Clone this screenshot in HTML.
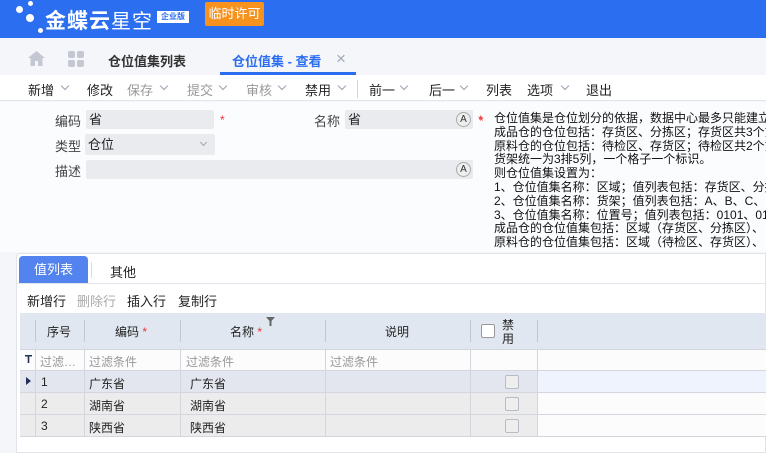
<!DOCTYPE html>
<html><head><meta charset="utf-8"><style>
*{margin:0;padding:0;box-sizing:border-box}
body{width:766px;height:453px;overflow:hidden;background:#f5f6f9;font-family:"Liberation Sans","Noto Sans CJK SC",sans-serif;font-size:12px;color:#222;position:relative}
.a{position:absolute;white-space:nowrap}
.chev{position:absolute;width:6px;height:6px;border-right:1px solid #9aa3b5;border-bottom:1px solid #9aa3b5;transform:rotate(45deg)}
.inp{position:absolute;background:#e9ebef;border-radius:2px;height:19px;padding-left:3px;line-height:19px;font-size:13px}
.ab{position:absolute;width:15px;height:15px;border-radius:50%;border:1px solid #aaa;background:#eee;font-size:10px;line-height:13px;text-align:center;color:#333}
.red{color:#e33}
.desc{position:absolute;left:494px;top:112px;font-size:12px;line-height:13.8px;white-space:nowrap;color:#111}
.vl{position:absolute;width:1px;background:#d3d6dd}
.hl{position:absolute;height:1px;background:#d3d6dd;left:20px;right:0}
.cb{position:absolute;width:14px;height:14px;border:1px solid #b8bcc4;border-radius:2px;background:#eee}
</style></head><body>
<div class="a" style="left:0;top:0;width:766px;height:38px;background:#2b6ff0"></div>
<div class="a" style="left:28px;top:1px;width:5px;height:5px;border-radius:50%;background:#fff"></div>
<div class="a" style="left:16px;top:6px;width:7px;height:7px;border-radius:50%;background:#fff"></div>
<div class="a" style="left:26px;top:14px;width:8px;height:8px;border-radius:50%;background:#fff"></div>
<div class="a" style="left:38px;top:28px;width:5px;height:5px;border-radius:50%;background:#fff"></div>
<div class="a" style="left:45px;top:5px;color:#fff;font-size:21px;font-weight:bold;letter-spacing:1px">金蝶云<span style="font-weight:normal;font-size:20px">星空</span></div>
<div class="a" style="left:157px;top:11px;width:32px;height:12px;background:#fff;color:#2b6ff0;font-size:8px;line-height:12px;text-align:center;font-weight:bold">企业版</div>
<div class="a" style="left:205px;top:2px;width:59px;height:24px;background:#f7921e;border-radius:2px;color:#fff;font-size:13px;line-height:24px;text-align:center">临时许可</div>
<div class="a" style="left:0;top:38px;width:766px;height:37px;background:#f4f6fa"></div>
<svg class="a" style="left:28px;top:51px" width="17" height="15" viewBox="0 0 17 15"><path d="M8.5 0L0 7h2.5v8h4.5v-5h3v5h4.5V7H17z" fill="#c4c8d2"/></svg>
<svg class="a" style="left:68px;top:51px" width="16" height="16"><rect x="0" y="0" width="7" height="7" rx="2" fill="#c4c8d2"/><rect x="9" y="0" width="7" height="7" rx="2" fill="#c4c8d2"/><rect x="0" y="9" width="7" height="7" rx="2" fill="#c4c8d2"/><rect x="9" y="9" width="7" height="7" rx="2" fill="#c4c8d2"/></svg>
<div class="a" style="left:108px;top:51px;font-size:13px;font-weight:bold;color:#333">仓位值集列表</div>
<div class="a" style="left:232px;top:51px;font-size:13px;font-weight:bold;color:#2b6ff0">仓位值集 - 查看</div>
<div class="a" style="left:336px;top:50px;font-size:17px;line-height:18px;color:#a0a8b8">×</div>
<div class="a" style="left:220px;top:72px;width:136px;height:3px;background:#2b6ff0"></div>
<div class="a" style="left:0;top:75px;width:766px;height:26px;background:#fff;border-bottom:1px solid #e3e6ec"></div>
<div class="a" style="left:28px;top:80px;font-size:13px">新增</div><div class="chev" style="left:62px;top:83px"></div>
<div class="a" style="left:87px;top:80px;font-size:13px">修改</div>
<div class="a" style="left:127px;top:80px;font-size:13px;color:#999">保存</div><div class="chev" style="left:161px;top:83px"></div>
<div class="a" style="left:187px;top:80px;font-size:13px;color:#999">提交</div><div class="chev" style="left:220px;top:83px"></div>
<div class="a" style="left:246px;top:80px;font-size:13px;color:#999">审核</div><div class="chev" style="left:279px;top:83px"></div>
<div class="a" style="left:305px;top:80px;font-size:13px">禁用</div><div class="chev" style="left:339px;top:83px"></div>
<div class="a" style="left:357px;top:80px;width:1px;height:18px;background:#d0d4dc"></div>
<div class="a" style="left:369px;top:80px;font-size:13px">前一</div><div class="chev" style="left:401px;top:83px"></div>
<div class="a" style="left:429px;top:80px;font-size:13px">后一</div><div class="chev" style="left:461px;top:83px"></div>
<div class="a" style="left:486px;top:80px;font-size:13px">列表</div>
<div class="a" style="left:527px;top:80px;font-size:13px">选项</div><div class="chev" style="left:562px;top:83px"></div>
<div class="a" style="left:586px;top:80px;font-size:13px">退出</div>
<div class="a" style="left:0;top:102px;width:766px;height:150px;background:#fbfcfe"></div>
<div class="a" style="left:55px;top:111px;font-size:13px;color:#444">编码</div>
<div class="inp" style="left:86px;top:110px;width:128px">省</div>
<div class="a red" style="left:220px;top:113px">*</div>
<div class="a" style="left:314px;top:111px;font-size:13px;color:#444">名称</div>
<div class="inp" style="left:345px;top:110px;width:128px">省</div><div class="ab" style="left:456px;top:112px">A</div>
<div class="a red" style="left:478px;top:113px">*</div>
<div class="a" style="left:55px;top:136px;font-size:13px;color:#444">类型</div>
<div class="inp" style="left:85px;top:134px;width:130px;height:21px;line-height:21px">仓位</div><div class="chev" style="left:201px;top:140px;width:5px;height:5px"></div>
<div class="a" style="left:55px;top:161px;font-size:13px;color:#444">描述</div>
<div class="inp" style="left:86px;top:160px;width:387px"></div><div class="ab" style="left:456px;top:162px">A</div>
<div class="desc">仓位值集是仓位划分的依据，数据中心最多只能建立<br>成品仓的仓位包括：存货区、分拣区；存货区共3个货<br>原料仓的仓位包括：待检区、存货区；待检区共2个货<br>货架统一为3排5列，一个格子一个标识。<br>则仓位值集设置为：<br>1、仓位值集名称：区域；值列表包括：存货区、分拣<br>2、仓位值集名称：货架；值列表包括：A、B、C、D<br>3、仓位值集名称：位置号；值列表包括：0101、0102<br>成品仓的仓位值集包括：区域（存货区、分拣区）、<br>原料仓的仓位值集包括：区域（待检区、存货区）、</div>
<div class="a red" style="left:479px;top:114px">*</div>
<div class="a" style="left:16px;top:253px;width:750px;height:200px;background:#fff;border:1px solid #e0e3e9;border-radius:4px 0 0 0"></div>
<div class="a" style="left:16px;top:283px;width:750px;height:1px;background:#e3e6ec"></div>
<div class="a" style="left:19px;top:256px;width:69px;height:27px;background:#5283ef;border-radius:4px 4px 0 0;color:#fff;font-size:13px;line-height:27px;text-align:center">值列表</div>
<div class="a" style="left:91px;top:262px;width:1px;height:16px;background:#ddd"></div>
<div class="a" style="left:110px;top:262px;font-size:13px">其他</div>
<div class="a" style="left:27px;top:291px;font-size:13px">新增行</div>
<div class="a" style="left:77px;top:291px;font-size:13px;color:#aaa">删除行</div>
<div class="a" style="left:127px;top:291px;font-size:13px">插入行</div>
<div class="a" style="left:178px;top:291px;font-size:13px">复制行</div>
<div class="a" style="left:20px;top:313px;width:746px;height:36px;background:#e1e7f0"></div>
<div class="a" style="left:20px;top:349px;width:746px;height:21px;background:#fcfcfc"></div>
<div class="a" style="left:20px;top:370px;width:517px;height:22px;background:#e3e6ee"></div>
<div class="a" style="left:537px;top:370px;width:229px;height:22px;background:#eef3fd"></div>
<div class="a" style="left:20px;top:392px;width:517px;height:44px;background:#ececec"></div>
<div class="a" style="left:537px;top:392px;width:229px;height:44px;background:#fcfcfc"></div>
<div class="hl" style="top:349px"></div><div class="hl" style="top:370px"></div><div class="hl" style="top:392px"></div><div class="hl" style="top:414px"></div><div class="hl" style="top:436px"></div>
<div class="vl" style="left:35px;top:320px;height:22px;background:#c2c6ce"></div>
<div class="vl" style="left:84px;top:320px;height:22px;background:#c2c6ce"></div>
<div class="vl" style="left:180px;top:320px;height:22px;background:#c2c6ce"></div>
<div class="vl" style="left:325px;top:320px;height:22px;background:#c2c6ce"></div>
<div class="vl" style="left:470px;top:320px;height:22px;background:#c2c6ce"></div>
<div class="vl" style="left:537px;top:320px;height:22px;background:#c2c6ce"></div>
<div class="vl" style="left:35px;top:349px;height:87px"></div>
<div class="vl" style="left:84px;top:349px;height:87px"></div>
<div class="vl" style="left:180px;top:349px;height:87px"></div>
<div class="vl" style="left:325px;top:349px;height:87px"></div>
<div class="vl" style="left:470px;top:349px;height:87px"></div>
<div class="vl" style="left:537px;top:349px;height:87px"></div>
<div class="a" style="left:47px;top:323px;font-size:12px">序号</div>
<div class="a" style="left:115px;top:323px;font-size:12px">编码 <span class="red">*</span></div>
<div class="a" style="left:230px;top:323px;font-size:12px">名称 <span class="red">*</span></div>
<svg class="a" style="left:266px;top:317px" width="9" height="9"><path d="M0 0h9L5.5 4v5h-2V4z" fill="#666"/></svg>
<div class="a" style="left:385px;top:323px;font-size:12px">说明</div>
<div class="a" style="left:481px;top:324px;width:14px;height:14px;background:#fff;border:1px solid #999;border-radius:2px"></div>
<div class="a" style="left:502px;top:318px;font-size:12px;line-height:14px">禁<br>用</div>
<svg class="a" style="left:25px;top:355px" width="7" height="8"><path d="M0 0h7v1.5H4.3V8H2.7V1.5H0z" fill="#22305a"/></svg>
<div class="a" style="left:40px;top:353px;color:#999">过滤…</div>
<div class="a" style="left:89px;top:353px;color:#999">过滤条件</div>
<div class="a" style="left:186px;top:353px;color:#999">过滤条件</div>
<div class="a" style="left:330px;top:353px;color:#999">过滤条件</div>
<svg class="a" style="left:26px;top:377px" width="5" height="8"><path d="M0 0l5 4-5 4z" fill="#22305a"/></svg>
<div class="a" style="left:41px;top:375px">1</div><div class="a" style="left:89px;top:375px">广东省</div><div class="a" style="left:190px;top:375px">广东省</div>
<div class="a" style="left:41px;top:397px">2</div><div class="a" style="left:89px;top:397px">湖南省</div><div class="a" style="left:190px;top:397px">湖南省</div>
<div class="a" style="left:41px;top:419px">3</div><div class="a" style="left:89px;top:419px">陕西省</div><div class="a" style="left:190px;top:419px">陕西省</div>
<div class="cb" style="left:505px;top:375px"></div><div class="cb" style="left:505px;top:397px"></div><div class="cb" style="left:505px;top:419px"></div>
</body></html>
